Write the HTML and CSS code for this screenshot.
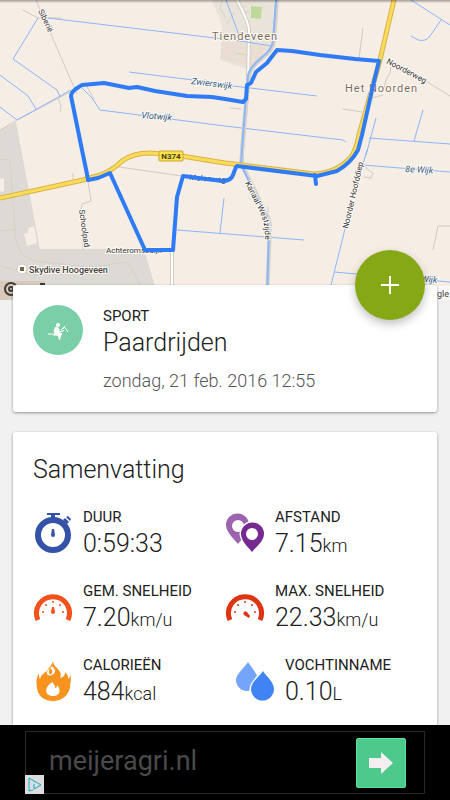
FILE: index.html
```html
<!DOCTYPE html>
<html lang="nl">
<head>
    <meta charset="UTF-8">
    <meta name="viewport" content="width=device-width, initial-scale=1.0">
    <title>Paardrijden</title>
    <link rel="stylesheet" href="styles.css">
</head>
<body>
    <main class="content">
        <div class="map">
            <svg class="map-canvas" viewBox="0 0 450 300" preserveAspectRatio="xMidYMid slice">
                <defs>
                    <linearGradient id="map-shade" x1="0" y1="0" x2="0" y2="1">
                        <stop offset="0" stop-color="#000" stop-opacity=".35"/>
                        <stop offset="1" stop-color="#000" stop-opacity="0"/>
                    </linearGradient>
                    <path id="kanaal-label" d="M245 183 C251 196 261 211 264 224 Q266 236 264 256"/>
                </defs>
                <rect width="450" height="300" fill="#f6ede4"/>

                <!-- airfield and village -->
                <path fill="#dddad5" d="M0 130 L16 122 L40 249 H144 L159 300 H0 Z"/>
                <path fill="#f6ede4" d="M0 179 L4 178 V191 L0 192 Z M24 234 L28 232 V228 L34 226 L35 230 L37 243 L27 246 Z"/>
                <path fill="#f6ede4" d="M16 122 L22 150 L40 249 H90 V110 Z"/>
                <path fill="#d8cabd" d="M0 281 H45 V300 H0 Z"/>
                <path fill="#eae3da" d="M212 0 H274 L272 45 L250 70 L220 60 L222 25 Z"/>
                <path fill="#eaded2" d="M221 42 L270 45 L252 66 L221 59 Z"/>
                <path fill="#bfd99b" d="M251 6 L262 7 L261 19 L251 18 Z"/>
                <g class="minor">
                    <path d="M0 159 L10 160 L15 229 L0 231 M15 229 Q15 260 42 262 L90 267 L128 262 L140 285 M0 266 L40 276"/>
                    <path d="M222 0 L220 8 L226 18 M234 12 L227 24 M250 12 H244 M235 53 L247 55"/>
                </g>

                <!-- paths -->
                <g class="path">
                    <path d="M36 0 L77 94 M23 10 L38 18 L62 18 M0 130 L17 120 L72 91 M58 98 L61 106 L60 112"/>
                    <path d="M86 85 L94 99 M73 173 V180 M88 181 L91 201 L82 204 L81 210 L83 249 M119 167 L182 176"/>
                    <path d="M363 28 L359 58 M388 58 L450 96 M391 67 L390 73 L386 80 L384 88 M383 95 L372 98 M343 109 L362 112 M230 108 L241 109"/>
                    <path d="M364 166 L370 171 L373 173 L371 178 L364 177 M450 226 H438 L433 250 M268 206 V212"/>
                </g>
                <path class="street-edge" d="M237 0 Q249 23 249 30 L248 83 L241 165 M172 250 V300"/>
                <path class="street" d="M237 0 Q249 23 249 30 L248 83 L241 165 M172 250 V300"/>

                <!-- waterways -->
                <g class="ditch">
                    <path d="M48 18 L240 41 L272 46 M38 18 L13 59 L57 90 L60 97 M0 75 L28 96 L36 109 M0 107 L17 120 L71 90"/>
                    <path d="M82 88 L92 98 L100 110 L225 126 L343 140 L346 142 M129 72 L193 80 M225 85 L317 96"/>
                    <path d="M177 230 L228 234 L304 240 M224 198 L220 233 M226 0 L240 38"/>
                    <path d="M411 0 L450 25 M441 20 L430 36 Q426 42 418 40 L411 36 M423 110 L414 141 M376 118 L366 155 M369 138 L450 144"/>
                    <path d="M367 150 L363 164 M363 165 L450 172 M345 229 L331 285 M334 272 L450 282"/>
                </g>
                <path class="canal-edge" d="M277 0 L274 41 Q273 50 262 58 Q250 68 249 76 L247 95 L242 150 L242 165 L268 217 L270 225 L267 300"/>
                <path class="canal" d="M276 0 L273 41 Q272 50 261 58 Q249 68 248 76 L246 95 L242 150 L241 165 L267 217 L269 225 L267 300"/>

                <!-- N374 -->
                <g class="highway">
                    <path class="highway-edge" d="M0 198 L83 180 L100 175 Q112 171 122 161 Q133 153 150 153 L175 155 L225 163 L314 174 Q337 173 351 157 Q356 150 359 135 L380 60 L394 0"/>
                    <path class="highway-fill" d="M0 198 L83 180 L100 175 Q112 171 122 161 Q133 153 150 153 L175 155 L225 163 L314 174 Q337 173 351 157 Q356 150 359 135 L380 60 L394 0"/>
                </g>
                <rect x="159" y="151" width="24" height="10" rx="1" fill="#fbe14a" stroke="#c9a72c"/>
                <text class="shield" x="171" y="159">N374</text>

                <!-- labels -->
                <g class="label">
                    <text transform="translate(38 11) rotate(64)">Siberië</text>
                    <text transform="translate(386 63) rotate(28)">Noorderweg</text>
                    <text transform="translate(79 210) rotate(82)">Schoolpad</text>
                    <text transform="translate(189 180) rotate(4)">Molenweg</text>
                    <text x="106" y="253">Achteromsedijk</text>
                    <text transform="translate(348 229) rotate(-77)">Noorder Hoofddiep</text>
                    <text><textPath href="#kanaal-label">Kanaal Westzijde</textPath></text>
                </g>
                <g class="label water">
                    <text transform="translate(191 84) rotate(7)">Zwierswijk</text>
                    <text transform="translate(141 118) rotate(5)">Vlotwijk</text>
                    <text transform="translate(405 172) rotate(3)">8e Wijk</text>
                    <text transform="translate(409 281) rotate(4)">9e Wijk</text>
                </g>
                <g class="label place">
                    <text x="212" y="40">Tiendeveen</text>
                    <text x="345" y="92">Het Noorden</text>
                </g>
                <circle cx="22" cy="269" r="5" fill="#fff" stroke="#d0cbc4"/>
                <rect x="20" y="267" width="4" height="4" fill="#7a6242"/>
                <text class="label poi" x="29" y="273">Skydive Hoogeveen</text>

                <!-- recorded route -->
                <path class="route" d="M315 175 L316 184 M237 166 L317 176 L337 171 Q351 163 358 150 L362 135 L372 90 L379 61 L355 59 L320 55 L292 51 L277 50 L267 63 L256 72 L251 83 L247 85 L246 99 L243 102 L225 99 L212 97 L187 96 L155 91 L137 87 L129 88 L104 83 L82 85 Q71 91 71 96 L82 150 L87 174 L88 180 L98 178 L110 173 L145 250 H173 L177 197 L183 176 L222 181 Q231 181 233 175 L236 167"/>
                <rect width="450" height="3" fill="url(#map-shade)"/>
                <circle cx="11" cy="289" r="6" fill="none" stroke="#413b35" stroke-width="2"/>
                <circle cx="11" cy="289" r="2" fill="none" stroke="#413b35" stroke-width="2"/>
                <path d="M40 284 H45" stroke="#413b35" stroke-width="2"/>
                <rect x="437" y="286" width="13" height="14" fill="#fbf9f7"/>
                <text class="credit" x="437" y="297">gle</text>
            </svg>
        </div>

        <section class="card activity">
            <svg class="sport-icon" viewBox="0 0 50 50">
                <circle cx="25" cy="25" r="25" fill="#7acfa8"/>
                <circle cx="25" cy="20" r="2" fill="#fff"/>
                <path fill="#fff" d="M22 22 Q25 21 26 24 L27 26 L31 25 V26 L26 28 L29 28 Q30 29 28 31 L27 35 H26 L25 31 L21 30 Q20 26 22 22 Z"/>
                <path fill="none" stroke="#fff" d="M15 29 H19 L22 31 M28 25 L31 22 L33 24 L35 27 M30 24 L32 21"/>
            </svg>
            <div class="activity-text">
                <div class="label-text">SPORT</div>
                <h1 class="title">Paardrijden</h1>
                <p class="date">zondag, 21 feb. 2016 12:55</p>
            </div>
            <button class="fab" type="button" aria-label="Toevoegen">
                <svg width="18" height="18" viewBox="0 0 18 18"><path d="M9 0 V18 M0 9 H18" stroke="#fff" stroke-width="2"/></svg>
            </button>
        </section>

        <section class="card summary">
            <h2 class="title">Samenvatting</h2>
            <div class="stats">
                <div class="stat">
                    <svg class="stat-icon" viewBox="0 0 40 44">
                        <circle cx="20" cy="24" r="15" fill="none" stroke="#3452a8" stroke-width="6"/>
                        <path fill="#3452a8" d="M14 2 H27 V4 H22 V8 H18 V4 H14 Z M30 9 L32 7 L36 11 L34 13 Z M33 6 L35 5 L38 8 L37 10 Z"/>
                        <path fill="#3452a8" d="M19 18 H21 L22 24 A2 2 0 1 1 18 24 Z"/>
                    </svg>
                    <div>
                        <div class="label-text">DUUR</div>
                        <div class="value">0:59:33</div>
                    </div>
                </div>
                <div class="stat">
                    <svg class="stat-icon" viewBox="0 0 40 44">
                        <path fill="#9c64ae" fill-rule="evenodd" d="M13 33 C9 28 1 21 1 14 A11 11 0 0 1 24 14 C24 21 17 28 13 33 Z M13 9 A6 6 0 1 0 13 21 A6 6 0 1 0 13 9 Z"/>
                        <path fill="#762a90" stroke="#fff" stroke-width="3" paint-order="stroke" d="M27 41 C23 36 16 30 16 23 A11 11 0 0 1 39 23 C39 30 31 36 27 41 Z"/>
                        <circle cx="27" cy="23" r="6" fill="#fff"/>
                    </svg>
                    <div>
                        <div class="label-text">AFSTAND</div>
                        <div class="value">7.15<span class="unit">km</span></div>
                    </div>
                </div>
                <div class="stat">
                    <svg class="stat-icon average" viewBox="0 0 40 44">
                        <path class="dial" d="M5 35 A16.5 16.5 0 1 1 35 35"/>
                        <g fill="currentColor">
                            <circle cx="10" cy="27" r="1"/><circle cx="13" cy="20" r="1"/><circle cx="20" cy="17" r="1"/><circle cx="27" cy="20" r="1"/><circle cx="30" cy="27" r="1"/>
                            <path d="M19 22 H21 L22 27 A2 2 0 1 1 18 27 Z"/>
                        </g>
                    </svg>
                    <div>
                        <div class="label-text">GEM. SNELHEID</div>
                        <div class="value">7.20<span class="unit">km/u</span></div>
                    </div>
                </div>
                <div class="stat">
                    <svg class="stat-icon maximum" viewBox="0 0 40 44">
                        <path class="dial" d="M5 35 A16.5 16.5 0 1 1 35 35"/>
                        <g fill="currentColor">
                            <circle cx="10" cy="27" r="1"/><circle cx="13" cy="20" r="1"/><circle cx="20" cy="17" r="1"/><circle cx="27" cy="20" r="1"/><circle cx="30" cy="27" r="1"/>
                            <path d="M25 31 L24 33 L19 30 A2 2 0 1 1 22 27 Z"/>
                        </g>
                    </svg>
                    <div>
                        <div class="label-text">MAX. SNELHEID</div>
                        <div class="value">22.33<span class="unit">km/u</span></div>
                    </div>
                </div>
                <div class="stat">
                    <svg class="stat-icon" viewBox="0 0 40 44">
                        <path fill="#f7931e" d="M20 2 C20 7 25 9 27 13 C28 15 28 17 27 19 C31 18 32 16 32 13 C35 16 35 17 35 20 C37 19 37 17 37 15 C39 21 37 25 37 28 C36 36 29 42 20 42 C11 42 5 37 4 29 C3 24 3 19 6 14 C6 17 6 19 7 20 C8 16 11 14 14 12 C15 9 19 7 20 2 Z"/>
                        <path fill="#fff" d="M20 23 C20 26 23 26 22 29 C24 29 24 27 24 26 C28 30 28 37 20 37 C11 37 11 27 20 23 Z"/>
                        <path fill="#fff" d="M17 9 C15 11 13 13 14 15 C16 18 21 16 22 13 C23 11 20 8 19 7 Q19 8 17 9 C20 12 20 14 18 15 C16 16 15 13 17 9 Z"/>
                    </svg>
                    <div>
                        <div class="label-text">CALORIEËN</div>
                        <div class="value">484<span class="unit">kcal</span></div>
                    </div>
                </div>
                <div class="stat indented">
                    <svg class="stat-icon" viewBox="0 0 40 44">
                        <path fill="#75a5fa" d="M13 3 C16 8 23 15 23 21 A11 11 0 0 1 1 21 C1 15 10 8 13 3 Z"/>
                        <path fill="#4084f3" stroke="#fff" stroke-width="3" paint-order="stroke" d="M28 12 C31 17 39 23 39 30 A11 11 0 0 1 16 30 C16 23 25 17 28 12 Z"/>
                    </svg>
                    <div>
                        <div class="label-text">VOCHTINNAME</div>
                        <div class="value">0.10<span class="unit">L</span></div>
                    </div>
                </div>
            </div>
        </section>
    </main>

    <footer class="ad">
        <a class="ad-link" href="#">
            <span class="ad-text">meijeragri.nl</span>
            <span class="ad-arrow">
                <svg width="24" height="22" viewBox="0 0 24 22"><path fill="#f3eef0" d="M0 6 H12 V0 L24 11 L12 22 V16 H0 Z"/></svg>
            </span>
            <svg class="ad-choices" viewBox="0 0 19 19">
                <rect width="19" height="19" fill="#dcdcdc"/>
                <path fill="none" stroke="#13b1cf" stroke-width="1" d="M8 15 L4 16 V3 L16 10 L9 14 V9 M9 6 V7"/>
            </svg>
        </a>
    </footer>
</body>
</html>
```

FILE: styles.css
```css
* {
    box-sizing: border-box;
}
body {
    margin: 0;
    height: 100vh;
    display: flex;
    flex-direction: column;
    background-color: #f1f1f1;
    color: #212121;
    font-family: Roboto, "Noto Sans", sans-serif;
}
.content {
    flex: 1;
    min-height: 0;
    overflow-y: auto;
    scrollbar-width: none;
}

/* Map */
.map-canvas {
    display: block;
    width: 100%;
    height: 300px;
}
.map-canvas path {
    stroke-linejoin: round;
}
.minor,
.path {
    fill: none;
    stroke: #d2cbc2;
    stroke-width: 1;
}
.minor {
    stroke: #d2ccc4;
    opacity: 0.7;
}
.street-edge {
    fill: none;
    stroke: #d3ccc3;
    stroke-width: 4;
}
.street {
    fill: none;
    stroke: #fff;
    stroke-width: 2;
}
.ditch {
    fill: none;
    stroke: #8bb6fa;
    stroke-width: 1;
}
.canal-edge {
    fill: none;
    stroke: #d8d2ca;
    stroke-width: 4;
}
.canal {
    fill: none;
    stroke: #8bb6fa;
    stroke-width: 2;
}
.highway {
    fill: none;
}
.highway-edge {
    stroke: #d8b24b;
    stroke-width: 5;
}
.highway-fill {
    stroke: #fbdc58;
    stroke-width: 3;
}
.route {
    fill: none;
    stroke: #2f7bf5;
    stroke-width: 4;
    stroke-linecap: round;
}
.shield {
    font-size: 8px;
    font-weight: bold;
    text-anchor: middle;
    fill: #4a4020;
}
.label {
    font-size: 8px;
    fill: #333;
    stroke: #fdfaf7;
    stroke-width: 2;
    paint-order: stroke;
}
.water {
    font-size: 9px;
    font-style: italic;
    fill: #33587f;
}
.place {
    font-size: 11px;
    letter-spacing: 1px;
    fill: #7d6c59;
}
.poi {
    font-size: 9px;
    font-weight: 500;
    fill: #47433e;
}
.credit {
    font-size: 9px;
    fill: #444;
}

/* Cards */
.card {
    margin: 0 13px 20px;
    padding: 20px;
    background-color: #fff;
    border-radius: 3px;
    box-shadow: 0 1px 3px rgba(0, 0, 0, 0.4);
}
.activity {
    position: relative;
    display: flex;
    gap: 20px;
    margin-top: -15px;
}
.sport-icon {
    width: 50px;
    height: 50px;
    flex: none;
}
.label-text {
    font-size: 15px;
    line-height: 22px;
}
.title {
    margin: 0;
    font-size: 25px;
    font-weight: 300;
    line-height: 32px;
}
.date {
    margin: 10px 0 0;
    font-size: 18px;
    font-weight: 300;
    line-height: 23px;
    color: #555;
}
.fab {
    position: absolute;
    top: -35px;
    right: 12px;
    width: 70px;
    height: 70px;
    padding: 0;
    display: flex;
    align-items: center;
    justify-content: center;
    border: none;
    border-radius: 50%;
    background-color: #87a815;
    box-shadow: 0 4px 10px rgba(0, 0, 0, 0.25);
    cursor: pointer;
}

/* Summary */
.summary {
    padding-top: 22px;
}
.stats {
    display: grid;
    grid-template-columns: 1fr 1fr;
    gap: 20px 0;
    margin-top: 20px;
}
.stat {
    display: flex;
    align-items: center;
    gap: 10px;
}
.stat.indented {
    padding-left: 10px;
}
.stat-icon {
    width: 40px;
    height: 44px;
    flex: none;
}
.average {
    color: #f1511b;
}
.maximum {
    color: #dd3512;
}
.dial {
    fill: none;
    stroke: currentColor;
    stroke-width: 5;
}
.value {
    font-size: 25px;
    font-weight: 300;
    line-height: 32px;
}
.unit {
    font-size: 18px;
    line-height: 18px;
}

/* Ad banner */
.ad {
    flex: none;
    height: 75px;
    padding: 6px 25px;
    background-color: #000;
}
.ad-link {
    position: relative;
    display: flex;
    align-items: center;
    justify-content: space-between;
    height: 63px;
    padding: 0 18px 0 23px;
    border: 1px solid #292929;
    color: #4a4a4a;
    text-decoration: none;
}
.ad-text {
    font-size: 27px;
    line-height: 32px;
    padding-bottom: 4px;
}
.ad-arrow {
    width: 50px;
    height: 50px;
    display: flex;
    align-items: center;
    justify-content: center;
    border: 1px solid #5be09b;
    border-radius: 2px;
    background-color: #4ec98c;
}
.ad-choices {
    position: absolute;
    left: -1px;
    bottom: -1px;
    width: 19px;
    height: 19px;
}
```
